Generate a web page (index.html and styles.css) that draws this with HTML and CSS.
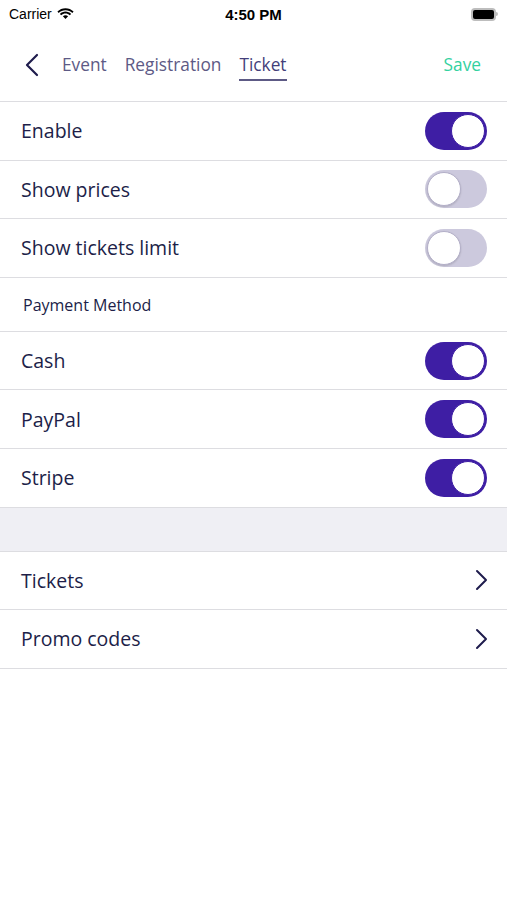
FILE: index.html
```html
<html>
    <head>
        <title>Ticket settings</title>
        <link rel="stylesheet" href="styles.css">
    </head>
    <body class="body">
        <div class="status">
            <div class="carrier">Carrier
                <svg class="wifi" width="17" height="12" viewBox="0 0 17 12">
                    <path d="M8.5 2.2c2.6 0 5 1 6.8 2.7l1.3-1.4C14.4 1.4 11.6.2 8.5.2S2.6 1.4.4 3.5l1.3 1.4C3.5 3.2 5.9 2.2 8.5 2.2z" fill="#000"/>
                    <path d="M8.5 5.6c1.6 0 3.1.6 4.3 1.7l1.3-1.4C12.6 4.5 10.6 3.6 8.5 3.6S4.4 4.5 2.9 5.9l1.3 1.4c1.2-1.1 2.7-1.7 4.3-1.7z" fill="#000"/>
                    <path d="M8.5 7.2c-1 0-1.9.4-2.6 1l2.6 2.9 2.6-2.9c-.7-.6-1.6-1-2.6-1z" fill="#000"/>
                </svg>
            </div>
            <div class="time">4:50 PM</div>
            <div class="battery"><span class="cell"></span><span class="tip"></span></div>
        </div>

        <div class="nav">
            <svg class="back" width="16" height="24" viewBox="0 0 16 24">
                <path d="M13 2L3 12l10 10" fill="none" stroke="#1f1c4d" stroke-width="2.2" stroke-linecap="round" stroke-linejoin="round"/>
            </svg>
            <span class="tab">Event</span>
            <span class="tab">Registration</span>
            <span class="tab active">Ticket</span>
            <span class="save">Save</span>
        </div>

        <div class="list">
            <div class="row">Enable <span class="switch on"></span></div>
            <div class="row">Show prices <span class="switch"></span></div>
            <div class="row">Show tickets limit <span class="switch"></span></div>
            <div class="head">Payment Method</div>
            <div class="row">Cash <span class="switch on"></span></div>
            <div class="row">PayPal <span class="switch on"></span></div>
            <div class="row">Stripe <span class="switch on"></span></div>
            <div class="gap"></div>
            <div class="row">Tickets
                <svg class="more" width="14" height="22" viewBox="0 0 14 22"><path d="M3 2l9 9-9 9" fill="none" stroke="#1f1c4d" stroke-width="2" stroke-linecap="round" stroke-linejoin="round"/></svg>
            </div>
            <div class="row">Promo codes
                <svg class="more" width="14" height="22" viewBox="0 0 14 22"><path d="M3 2l9 9-9 9" fill="none" stroke="#1f1c4d" stroke-width="2" stroke-linecap="round" stroke-linejoin="round"/></svg>
            </div>
        </div>
    </body>
</html>
```

FILE: styles.css
```css
.body{
    margin: 0;
    width: 507px;
    height: 900px;
    background-color: white;
    font-family: "Open Sans", "Noto Sans", sans-serif;
    color: #201e48;
}
.status{
    height: 28px;
    display: flex;
    align-items: center;
    justify-content: space-between;
    padding: 0 9px 0 9px;
    font-family: "Liberation Sans", sans-serif;
    color: black;
}
.carrier{
    width: 120px;
    font-size: 14px;
    display: flex;
    align-items: center;
    gap: 5px;
}
.time{
    font-size: 15px;
    font-weight: bold;
}
.battery{
    width: 120px;
    display: flex;
    justify-content: flex-end;
    align-items: center;
}
.cell{
    width: 21px;
    height: 9px;
    background-color: black;
    border: 2px solid #bdbdbd;
    border-radius: 4px;
}
.tip{
    width: 2px;
    height: 4px;
    background-color: #bdbdbd;
    border-radius: 0 2px 2px 0;
}
.nav{
    height: 74px;
    display: flex;
    align-items: center;
    padding: 0 26px 0 24px;
    box-sizing: border-box;
    border-bottom: 1px solid #dddde1;
}
.back{
    margin-right: 22px;
    margin-top: 0;
}
.tab{
    font-size: 17.3px;
    color: #5d5a85;
    margin-right: 18px;
    padding-bottom: 3px;
    border-bottom: 2px solid transparent;
    margin-top: 4px;
}
.tab.active{
    color: #433f7a;
    border-bottom-color: #5d5a85;
}
.save{
    margin-left: auto;
    font-size: 17.3px;
    color: #33d19f;
}
.row{
    height: 58.6px;
    box-sizing: border-box;
    border-bottom: 1px solid #dddde1;
    display: flex;
    align-items: center;
    justify-content: space-between;
    padding: 0 20px 0 21px;
    font-size: 19.5px;
}
.head{
    height: 54px;
    box-sizing: border-box;
    border-bottom: 1px solid #dddde1;
    padding: 16px 23px 0 23px;
    font-size: 16px;
}
.gap{
    height: 44px;
    box-sizing: border-box;
    background-color: #efeff4;
    border-bottom: 1px solid #dddde1;
}
.switch{
    position: relative;
    width: 62px;
    height: 38px;
    border-radius: 19px;
    background-color: #ccc9dd;
}
.switch::after{
    content: "";
    position: absolute;
    top: 2px;
    left: 2px;
    width: 32px;
    height: 32px;
    border-radius: 50%;
    background-color: white;
    border: 1px solid #b3afc8;
    box-shadow: 0 1px 2px rgba(0,0,0,0.15);
}
.switch.on{
    background-color: #3e1ea4;
}
.switch.on::after{
    left: 26px;
    border-color: #3e1ea4;
    box-shadow: none;
}
.more{
    margin-right: -1px;
}
```
